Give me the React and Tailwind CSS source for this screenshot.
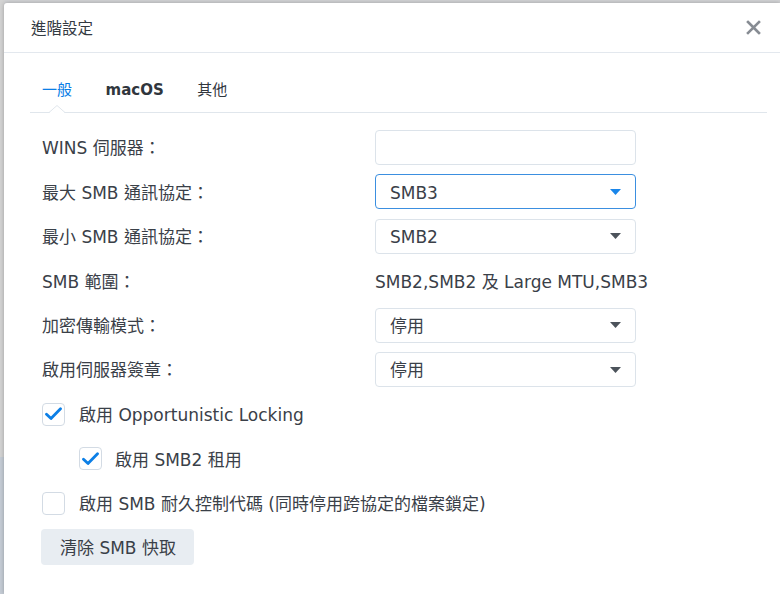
import React from "react";

const font = { fontFamily: '"DejaVu Sans", "Noto Sans CJK TC", sans-serif' };

function Arrow({ active }) {
  return (
    <svg width="11" height="6" viewBox="0 0 11 6" className="shrink-0">
      <path d="M0 0 H11 L5.5 6 Z" fill={active ? "#1a86ea" : "#4c535b"} />
    </svg>
  );
}

function Select({ value, active }) {
  return (
    <div
      className={`w-[261px] h-[35px] rounded-[4px] border flex items-center justify-between pl-[14px] pr-[14px] bg-white ${
        active ? "border-[#3b8fe0]" : "border-[#dce3ea]"
      }`}
    >
      <span className="text-[17px] text-[#3a4048] pt-[3px]">{value}</span>
      <Arrow active={active} />
    </div>
  );
}

function Check({ checked }) {
  return (
    <div className="w-[23px] h-[23px] rounded-[4px] border border-[#d3dbe4] bg-white flex items-center justify-center shrink-0">
      {checked && (
        <svg width="17" height="14" viewBox="0 0 17 14">
          <path d="M1.5 7.2 L6 11.5 L15.5 1.8" fill="none" stroke="#0c7fe6" strokeWidth="2.8" strokeLinecap="round" strokeLinejoin="round" />
        </svg>
      )}
    </div>
  );
}

function Row({ label, children }) {
  return (
    <div className="h-[35px] flex items-center">
      <div className="w-[333px] text-[17px] text-[#3a4048] pt-[3px]">{label}</div>
      {children}
    </div>
  );
}

export default function App() {
  return (
    <div className="w-[780px] h-[594px] overflow-hidden flex bg-[#d2d3d5]" style={font}>
      <div className="w-[4px] h-full flex flex-col shrink-0">
        <div className="h-[457px] bg-[#d3d3d3]" />
        <div className="flex-1 bg-[#c5ccd5]" />
      </div>
      <div className="flex-1 mt-[3px] bg-white shadow-[0_0_4px_rgba(0,0,0,0.25)] rounded-tl-[3px] flex flex-col">
        <div className="h-[50px] shrink-0 border-b border-[#e3e8ee] flex items-center justify-between pl-[27px] pr-[19px]">
          <span className="text-[15.5px] text-[#333a42] pt-[4px]">進階設定</span>
          <svg width="15" height="15" viewBox="0 0 15 15">
            <path d="M2 2 L13 13 M13 2 L2 13" stroke="#878c93" strokeWidth="2.6" strokeLinecap="square" />
          </svg>
        </div>
        <div className="pl-[26px] pr-[13px]">
          <div className="relative h-[60px] border-b border-[#e0e6ec] flex items-center pl-[12px] gap-[33.5px] pt-[15px]">
            <span className="text-[15px] text-[#0b7ee6]">一般</span>
            <span className="text-[15px] font-bold text-[#30363d]">macOS</span>
            <span className="text-[15px] text-[#30363d]">其他</span>
            <svg width="16" height="8" viewBox="0 0 16 8" className="absolute left-[19px] bottom-[-1px]">
              <path d="M0 7.5 L8 0.5 L16 7.5" fill="white" stroke="#e0e6ec" strokeWidth="1" />
              <rect x="1" y="7" width="14" height="2" fill="white" />
            </svg>
          </div>
          <div className="pl-[12px] pt-[17px] flex flex-col gap-[9.45px]">
            <Row label="WINS 伺服器：">
              <div className="w-[261px] h-[35px] rounded-[4px] border border-[#dce3ea] bg-white" />
            </Row>
            <Row label="最大 SMB 通訊協定：">
              <Select value="SMB3" active />
            </Row>
            <Row label="最小 SMB 通訊協定：">
              <Select value="SMB2" />
            </Row>
            <Row label="SMB 範圍：">
              <span className="text-[17px] text-[#3a4048] pt-[3px]">SMB2,SMB2 及 Large MTU,SMB3</span>
            </Row>
            <Row label="加密傳輸模式：">
              <Select value="停用" />
            </Row>
            <Row label="啟用伺服器簽章：">
              <Select value="停用" />
            </Row>
            <div className="h-[35px] flex items-center gap-[14px]">
              <Check checked />
              <span className="text-[17px] text-[#3a4048] pt-[4px]">啟用 Opportunistic Locking</span>
            </div>
            <div className="h-[35px] flex items-center gap-[13px] pl-[37px]">
              <Check checked />
              <span className="text-[17px] text-[#3a4048] pt-[4px]">啟用 SMB2 租用</span>
            </div>
            <div className="h-[35px] flex items-center gap-[14px]">
              <Check />
              <span className="text-[17px] text-[#3a4048] pt-[4px]">啟用 SMB 耐久控制代碼 (同時停用跨協定的檔案鎖定)</span>
            </div>
            <div className="h-[35px] flex items-center">
              <button className="h-[36px] w-[153px] -ml-[1px] rounded-[4px] bg-[#e8edf2] text-[17px] text-[#3a4048] text-left pl-[19px] pt-[3px]">
                清除 SMB 快取
              </button>
            </div>
          </div>
        </div>
      </div>
    </div>
  );
}
